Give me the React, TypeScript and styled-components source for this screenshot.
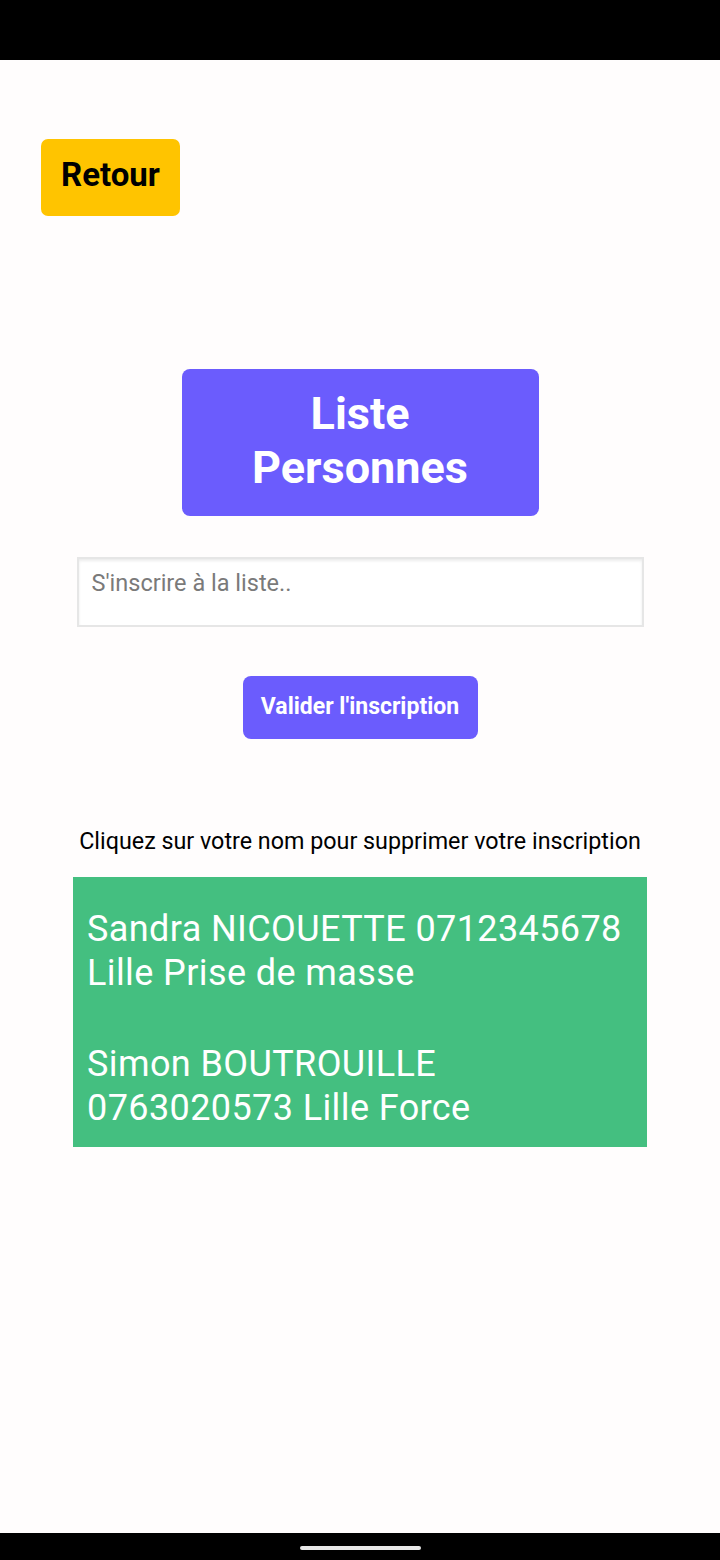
import styled, {createGlobalStyle} from 'styled-components';

const GlobalStyle = createGlobalStyle`
    html, body {
        margin: 0;
        padding: 0;
        background: #fffdfd;
    }
    * {
        box-sizing: border-box;
    }
`;

const Screen = styled.div`
    width: 720px;
    height: 1560px;
    display: flex;
    flex-direction: column;
    background: #fffdfd;
    font-family: Roboto, "Liberation Sans", sans-serif;
    overflow: hidden;
`;

const StatusBar = styled.div`
    height: 60px;
    flex-shrink: 0;
    background: #000;
`;

const Content = styled.main`
    flex: 1;
    display: flex;
    flex-direction: column;
    align-items: center;
`;

const BackRow = styled.div`
    align-self: stretch;
    padding: 79px 0 0 41px;
`;

const BackButton = styled.button`
    width: 139px;
    height: 77px;
    border: none;
    border-radius: 7px;
    background: #ffc400;
    color: #000;
    font-family: inherit;
    font-weight: 700;
    font-size: 33px;
    padding: 0 0 6px;
`;

const TitleBox = styled.h1`
    margin: 153px 0 0;
    width: 357px;
    height: 147px;
    padding: 18px 60px 0;
    border-radius: 8px;
    background: #6b5cfd;
    color: #fff;
    font-size: 45px;
    line-height: 54px;
    font-weight: 700;
    text-align: center;
`;

const Field = styled.input`
    margin-top: 41px;
    width: 567px;
    height: 70px;
    border: 2px solid #e6e6e6;
    box-shadow: inset 0 2px 3px rgba(0, 0, 0, 0.08);
    padding: 12px 13px 30px;
    font-family: inherit;
    font-size: 23.5px;
    color: #222;
    background: #fff;
    outline: none;

    &::placeholder {
        color: #7a7a7a;
    }
`;

const SubmitButton = styled.button`
    margin-top: 49px;
    width: 235px;
    height: 63px;
    border: none;
    border-radius: 8px;
    background: #6b5cfd;
    color: #fff;
    font-family: inherit;
    font-weight: 700;
    font-size: 23px;
    padding: 0 0 3px;
`;

const Hint = styled.p`
    margin: 88px 0 0;
    font-size: 23.3px;
    color: #000;
    text-align: center;
`;

const List = styled.ul`
    margin: 22px 0 0;
    width: 574px;
    list-style: none;
    background: #44bf80;
    padding: 30px 14px 17px;
    display: flex;
    flex-direction: column;
    gap: 47px;
`;

const Person = styled.li`
    color: #fff;
    font-size: 36px;
    letter-spacing: 0.4px;
    line-height: 44px;
`;

const NavBar = styled.div`
    height: 27px;
    flex-shrink: 0;
    background: #000;
    display: flex;
    justify-content: center;
    padding-top: 13px;
`;

const HomePill = styled.div`
    width: 121px;
    height: 4px;
    border-radius: 2px;
    background: #e8e8e8;
`;

const people = [
    'Sandra NICOUETTE 0712345678 Lille Prise de masse',
    'Simon BOUTROUILLE 0763020573 Lille Force',
];

export default function App() {
    return (
        <Screen>
            <GlobalStyle/>
            <StatusBar/>
            <Content>
                <BackRow>
                    <BackButton>Retour</BackButton>
                </BackRow>
                <TitleBox>Liste Personnes</TitleBox>
                <Field placeholder="S'inscrire à la liste.."/>
                <SubmitButton>Valider l'inscription</SubmitButton>
                <Hint>Cliquez sur votre nom pour supprimer votre inscription</Hint>
                <List>
                    {people.map((p, i) => (
                        <Person key={i}>{p}</Person>
                    ))}
                </List>
            </Content>
            <NavBar>
                <HomePill/>
            </NavBar>
        </Screen>
    );
}
